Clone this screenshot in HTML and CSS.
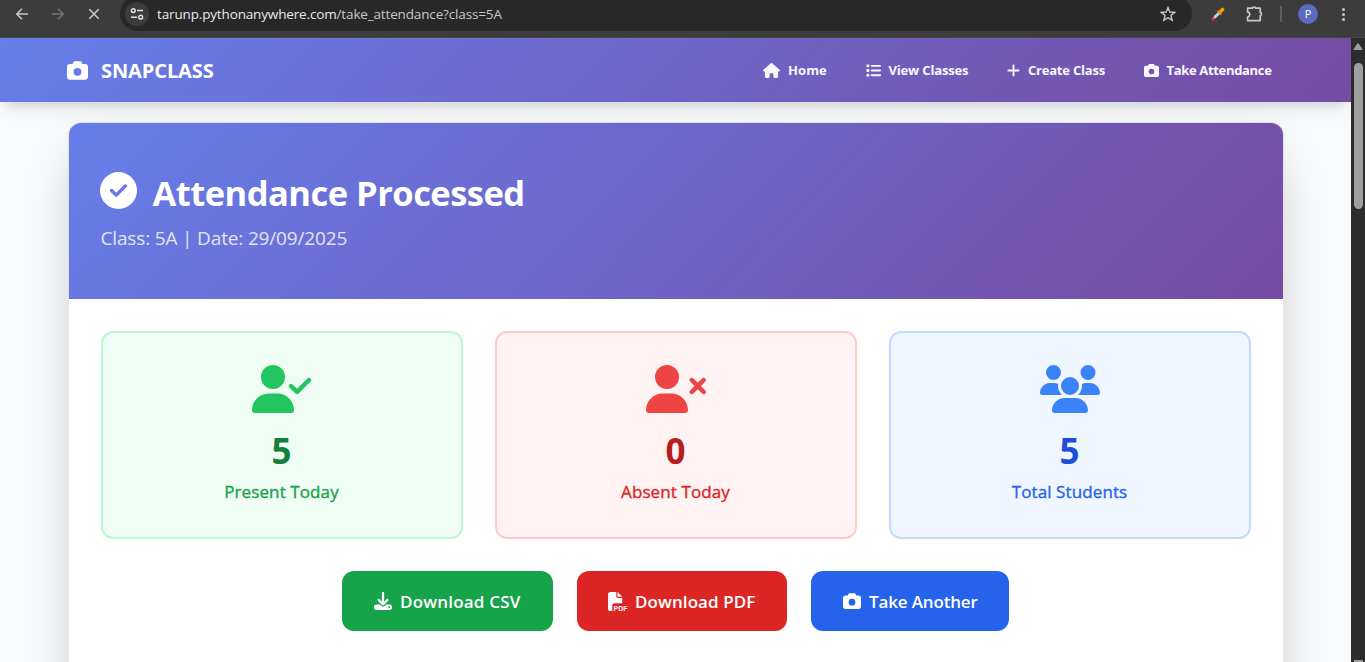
FILE: index.html
```
<!DOCTYPE html>
<html lang="en">
<head>
<meta charset="utf-8">
<title>SnapClass - Attendance Processed</title>
<link rel="stylesheet" href="styles.css">
</head>
<body>
<svg class="sprite" aria-hidden="true">
  <symbol id="camera" viewBox="0 0 512 512"><path d="M149.1 64.8L138.7 96H64C28.7 96 0 124.7 0 160V416c0 35.3 28.7 64 64 64H448c35.3 0 64-28.7 64-64V160c0-35.3-28.7-64-64-64H373.3L362.9 64.8C356.4 45.2 338.1 32 317.4 32H194.6c-20.7 0-39 13.2-45.5 32.8zM256 192a96 96 0 1 1 0 192 96 96 0 1 1 0-192z"/></symbol>
</svg>
<header class="browser">
  <svg class="b-icon back" viewBox="0 0 16 16"><path d="M14 8H3M8 2.8L2.8 8L8 13.2"/></svg>
  <svg class="b-icon forward" viewBox="0 0 16 16"><path d="M2 8H13M8 2.8L13.2 8L8 13.2"/></svg>
  <svg class="b-icon stop" viewBox="0 0 16 16"><path d="M3.3 3.3L12.7 12.7M12.7 3.3L3.3 12.7"/></svg>
  <div class="address">
    <span class="site-info"><svg viewBox="0 0 16 16"><circle cx="4.3" cy="4.6" r="1.9"/><path d="M8 4.6H14M2 11.2H8"/><circle cx="11.7" cy="11.2" r="1.9"/></svg></span>
    <span class="url"><span class="domain">tarunp.pythonanywhere.com</span>/take_attendance?class=5A</span>
    <svg class="star" viewBox="0 0 16 16"><path d="M8 1.6L9.8 6L14.6 6.4L10.9 9.5L12.1 14.2L8 11.7L3.9 14.2L5.1 9.5L1.4 6.4L6.2 6Z"/></svg>
  </div>
  <svg class="picker" viewBox="0 0 14 14"><path d="M1.8 12.3L4.3 9.8" stroke="#e91e63" stroke-width="3"/><path d="M4 10L8.3 5.7" stroke="#a6d8f5" stroke-width="2.8"/><path d="M7 4.3L9.8 7.1" stroke="#f57c00" stroke-width="1.8"/><path d="M9.2 4.8L11.6 2.4" stroke="#ff9800" stroke-width="3.6"/></svg>
  <svg class="puzzle" viewBox="0 0 18 18"><path d="M2.6 3.2H7.4A1.6 1.2 0 0 1 10.6 3.2H15.2V7.4A1.2 1.6 0 0 1 15.2 10.6V15.6H2.6V12A2.6 2.6 0 0 0 2.6 6.9V3.2Z"/></svg>
  <span class="divider"></span>
  <span class="avatar">P</span>
  <span class="more"><i></i><i></i><i></i></span>
</header>
<div class="viewport">
  <div class="page">
    <nav class="nav">
      <a class="brand"><svg class="icon"><use href="#camera"/></svg><span class="brand-name">SNAPCLASS</span></a>
      <div class="links">
        <a class="link home"><svg class="icon" viewBox="0 0 576 512"><path d="M575.8 255.5c0 18-15 32.1-32 32.1h-32l.7 160.2c0 2.7-.2 5.4-.5 8.1V472c0 22.1-17.9 40-40 40H456c-1.1 0-2.2 0-3.3-.1c-1.4 .1-2.8 .1-4.2 .1H416 392c-22.1 0-40-17.9-40-40V448 384c0-17.7-14.3-32-32-32H256c-17.7 0-32 14.3-32 32v64 24c0 22.1-17.9 40-40 40H160 128.1c-1.5 0-3-.1-4.5-.2c-1.2 .1-2.4 .2-3.6 .2H104c-22.1 0-40-17.9-40-40V360c0-.9 0-1.9 .1-2.8V287.6H32c-18 0-32-14-32-32.1c0-9 3-17 10-24L266.4 8c7-7 15-8 22-8s15 2 21 7L564.8 231.5c8 7 12 15 11 24z"/></svg><span>Home</span></a>
        <a class="link view"><svg class="icon" viewBox="0 0 512 512"><path d="M40 48C26.7 48 16 58.7 16 72v48c0 13.3 10.7 24 24 24H88c13.3 0 24-10.7 24-24V72c0-13.3-10.7-24-24-24H40zM192 64c-17.7 0-32 14.3-32 32s14.3 32 32 32H480c17.7 0 32-14.3 32-32s-14.3-32-32-32H192zm0 160c-17.7 0-32 14.3-32 32s14.3 32 32 32H480c17.7 0 32-14.3 32-32s-14.3-32-32-32H192zm0 160c-17.7 0-32 14.3-32 32s14.3 32 32 32H480c17.7 0 32-14.3 32-32s-14.3-32-32-32H192zM16 232v48c0 13.3 10.7 24 24 24H88c13.3 0 24-10.7 24-24V232c0-13.3-10.7-24-24-24H40c-13.3 0-24 10.7-24 24zM40 368c-13.3 0-24 10.7-24 24v48c0 13.3 10.7 24 24 24H88c13.3 0 24-10.7 24-24V392c0-13.3-10.7-24-24-24H40z"/></svg><span>View Classes</span></a>
        <a class="link create"><svg class="icon" viewBox="0 0 448 512"><path d="M256 80c0-17.7-14.3-32-32-32s-32 14.3-32 32V224H48c-17.7 0-32 14.3-32 32s14.3 32 32 32H192V432c0 17.7 14.3 32 32 32s32-14.3 32-32V288H400c17.7 0 32-14.3 32-32s-14.3-32-32-32H256V80z"/></svg><span>Create Class</span></a>
        <a class="link take"><svg class="icon"><use href="#camera"/></svg><span>Take Attendance</span></a>
      </div>
    </nav>
    <main class="card">
      <section class="hero">
        <h1><svg class="icon" viewBox="0 0 512 512"><path d="M256 512A256 256 0 1 0 256 0a256 256 0 1 0 0 512zM369 209L241 337c-9.4 9.4-24.6 9.4-33.9 0l-64-64c-9.4-9.4-9.4-24.6 0-33.9s24.6-9.4 33.9 0l47 47L335 175c9.4-9.4 24.6-9.4 33.9 0s9.4 24.6 0 33.9z"/></svg><span>Attendance Processed</span></h1>
        <p>Class: 5A | Date: 29/09/2025</p>
      </section>
      <section class="stats">
        <div class="stat present">
          <svg class="icon" viewBox="0 0 640 512"><path d="M96 128a128 128 0 1 1 256 0A128 128 0 1 1 96 128zM0 482.3C0 383.8 79.8 304 178.3 304h91.4C368.2 304 448 383.8 448 482.3c0 16.4-13.3 29.7-29.7 29.7H29.7C13.3 512 0 498.7 0 482.3zM625 177L497 305c-9.4 9.4-24.6 9.4-33.9 0l-64-64c-9.4-9.4-9.4-24.6 0-33.9s24.6-9.4 33.9 0l47 47L591 143c9.4-9.4 24.6-9.4 33.9 0s9.4 24.6 0 33.9z"/></svg>
          <strong>5</strong><span class="label">Present Today</span>
        </div>
        <div class="stat absent">
          <svg class="icon" viewBox="0 0 640 512"><path d="M96 128a128 128 0 1 1 256 0A128 128 0 1 1 96 128zM0 482.3C0 383.8 79.8 304 178.3 304h91.4C368.2 304 448 383.8 448 482.3c0 16.4-13.3 29.7-29.7 29.7H29.7C13.3 512 0 498.7 0 482.3zM471 143c9.4-9.4 24.6-9.4 33.9 0l47 47 47-47c9.4-9.4 24.6-9.4 33.9 0s9.4 24.6 0 33.9l-47 47 47 47c9.4 9.4 9.4 24.6 0 33.9s-24.6 9.4-33.9 0l-47-47-47 47c-9.4 9.4-24.6 9.4-33.9 0s-9.4-24.6 0-33.9l47-47-47-47c-9.4-9.4-9.4-24.6 0-33.9z"/></svg>
          <strong>0</strong><span class="label">Absent Today</span>
        </div>
        <div class="stat total">
          <svg class="icon" viewBox="0 0 640 512"><path d="M144 0a80 80 0 1 1 0 160A80 80 0 1 1 144 0zM512 0a80 80 0 1 1 0 160A80 80 0 1 1 512 0zM0 298.7C0 239.8 47.8 192 106.7 192h42.7c15.9 0 31 3.5 44.6 9.7c-1.3 7.2-1.9 14.7-1.9 22.3c0 38.2 16.8 72.5 43.3 96c-.2 0-.4 0-.7 0H21.3C9.6 320 0 310.4 0 298.7zM405.3 320c-.2 0-.4 0-.7 0c26.6-23.5 43.3-57.8 43.3-96c0-7.6-.7-15-1.9-22.3c13.6-6.3 28.7-9.7 44.6-9.7h42.7C592.2 192 640 239.8 640 298.7c0 11.8-9.6 21.3-21.3 21.3H405.3zM224 224a96 96 0 1 1 192 0 96 96 0 1 1-192 0zM128 485.3C128 411.7 187.7 352 261.3 352H378.7C452.3 352 512 411.7 512 485.3c0 14.7-11.9 26.7-26.7 26.7H154.7c-14.7 0-26.7-11.9-26.7-26.7z"/></svg>
          <strong>5</strong><span class="label">Total Students</span>
        </div>
      </section>
      <section class="actions">
        <a class="btn csv"><svg class="icon" viewBox="0 0 512 512"><path d="M288 32c0-17.7-14.3-32-32-32s-32 14.3-32 32V274.7l-73.4-73.4c-12.5-12.5-32.8-12.5-45.3 0s-12.5 32.8 0 45.3l128 128c12.5 12.5 32.8 12.5 45.3 0l128-128c12.5-12.5 12.5-32.8 0-45.3s-32.8-12.5-45.3 0L288 274.7V32zM64 352c-35.3 0-64 28.7-64 64v32c0 35.3 28.7 64 64 64H448c35.3 0 64-28.7 64-64V416c0-35.3-28.7-64-64-64H346.5l-45.3 45.3c-25 25-65.5 25-90.5 0L165.5 352H64zm368 56a24 24 0 1 1 0 48 24 24 0 1 1 0-48z"/></svg><span>Download CSV</span></a>
        <a class="btn pdf"><svg class="icon" viewBox="0 0 512 512"><path d="M0 64C0 28.7 28.7 0 64 0H224V128c0 17.7 14.3 32 32 32H384V304H176c-35.3 0-64 28.7-64 64V512H64c-35.3 0-64-28.7-64-64V64zm384 64H256V0L384 128z"/><text x="150" y="508" textLength="372" lengthAdjust="spacingAndGlyphs">PDF</text></svg><span>Download PDF</span></a>
        <a class="btn another"><svg class="icon"><use href="#camera"/></svg><span>Take Another</span></a>
      </section>
    </main>
  </div>
  <div class="scrollbar"><svg viewBox="0 0 14 14"><path d="M7 5.2L10.5 10.2H3.5Z"/></svg><span class="thumb"></span><span class="down"></span></div>
</div>
</body>
</html>
```
FILE: styles.css
```
* { box-sizing: border-box; }
body {
  margin: 0;
  width: 1365px;
  height: 662px;
  overflow: hidden;
  display: flex;
  flex-direction: column;
  font-family: "Open Sans", "Noto Sans", sans-serif;
}
span, strong, p, a { white-space: nowrap; }
.sprite { display: none; }
.icon { fill: currentColor; flex: none; display: block; overflow: visible; }

/* Browser toolbar */
.browser {
  height: 38px;
  flex: none;
  background: #3c3c3c;
  border-bottom: 1px solid #464646;
  display: flex;
  align-items: center;
  padding: 0 0 9px 14px;
}
.b-icon { width: 16px; height: 16px; flex: none; fill: none; stroke: #c7c7c7; stroke-width: 1.6; }
.forward { margin-left: 20px; stroke: #757575; }
.stop { margin-left: 20px; }
.address {
  width: 1072px;
  height: 35px;
  margin: -4px 0 0 18px;
  flex: none;
  border-radius: 17.5px;
  background: #282828;
  display: flex;
  align-items: center;
  padding: 1px 16px 0 5px;
  align-self: flex-start;
}
.site-info {
  width: 24px;
  height: 24px;
  border-radius: 50%;
  background: #3c3c3c;
  display: flex;
  align-items: center;
  justify-content: center;
}
.site-info svg { width: 16px; height: 16px; fill: none; stroke: #dedede; stroke-width: 1.5; }
.url { margin-left: 8px; font-size: 13.5px; line-height: 20px; color: #c7c7c7; letter-spacing: -0.15px; }
.domain { color: #e8e8e8; }
.star { width: 16px; height: 16px; margin-left: auto; fill: none; stroke: #c7c7c7; stroke-width: 1.4; }
.picker { width: 14px; height: 14px; margin-left: 19px; fill: none; stroke-linecap: round; flex: none; }
.puzzle { width: 18px; height: 18px; margin-left: 20px; fill: none; stroke: #c7c7c7; stroke-width: 1.7; stroke-linejoin: round; flex: none; }
.divider { width: 2px; height: 16px; background: #5e5e5e; margin-left: 17px; }
.avatar {
  width: 20px;
  height: 20px;
  margin-left: 16px;
  border-radius: 50%;
  background: #5c6bc0;
  color: #fff;
  font-size: 11px;
  line-height: 20px;
  text-align: center;
}
.more { display: flex; flex-direction: column; gap: 2px; margin-left: 24px; }
.more i { width: 3px; height: 3px; border-radius: 50%; background: #c7c7c7; }

/* Page area */
.viewport { flex: 1; display: flex; min-height: 0; }
.page {
  width: 1351px;
  height: 624px;
  overflow: hidden;
  background: #f8fafc;
  display: flex;
  flex-direction: column;
  align-items: center;
}
.nav {
  width: 100%;
  height: 64px;
  flex: none;
  padding: 0 79.5px 0 67px;
  display: flex;
  align-items: center;
  justify-content: space-between;
  color: #fff;
  background: linear-gradient(135deg, #667eea 0%, #764ba2 100%);
  box-shadow: 0 10px 25px -5px rgba(0, 0, 0, .1), 0 8px 10px -6px rgba(0, 0, 0, .1);
  position: relative;
  z-index: 1;
}
.brand { display: flex; align-items: center; gap: 13px; font-size: 20px; font-weight: 700; }
.brand .icon { width: 21px; height: 21px; }
.brand-name { letter-spacing: -0.1px; line-height: 28px; padding-top: 1px; }
.links { display: flex; align-items: center; gap: 39px; }
.link { display: flex; align-items: center; gap: 7.5px; font-size: 13px; font-weight: 700; line-height: 20px; color: #f8f7ff; letter-spacing: -0.33px; }
.link .icon { height: 15px; width: 15px; }
.home { letter-spacing: 0.15px; }
.home .icon { width: 17px; }
.view { letter-spacing: -0.15px; }
.create { letter-spacing: -0.2px; }
.create .icon { width: 13px; }

.card {
  width: 1214px;
  height: 900px;
  flex: none;
  margin-top: 21px;
  background: #fff;
  border-radius: 12px 12px 0 0;
  overflow: hidden;
  box-shadow: 0 0 0 1px #e3e4e8, 0 25px 50px -12px rgba(0, 0, 0, .25);
}
.hero {
  height: 176px;
  padding: 48px 32px 0 31px;
  color: #fff;
  background: linear-gradient(135deg, #667eea 0%, #764ba2 100%);
}
.hero h1 { margin: 0; display: flex; font-size: 34.5px; line-height: 44px; font-weight: 700; gap: 16px; }
.hero h1 .icon { width: 37px; height: 37px; margin-top: 1px; }
.hero h1 span { letter-spacing: -0.52px; }
.hero p { margin: 9px 0 0; padding-left: 1px; font-size: 19px; line-height: 28px; color: #e2e4f4; letter-spacing: -0.16px; }

.stats { display: grid; grid-template-columns: repeat(3, 362px); gap: 32px; padding: 32px 32px 0; }
.stat {
  height: 208px;
  border: 2px solid;
  border-radius: 12px;
  padding-top: 32px;
  display: flex;
  flex-direction: column;
  align-items: center;
}
.stat .icon { width: 60px; height: 48px; }
.stat strong { margin-top: 18px; font-size: 35px; line-height: 40px; }
.label { margin-top: 7px; font-size: 17px; font-weight: 400; line-height: 28px; letter-spacing: 0.1px; -webkit-text-stroke: 0.35px currentColor; }
.present { background: #f0fdf4; border-color: #bbf7d0; color: #22c55e; }
.present strong { color: #15803d; }
.present .label { color: #16a34a; }
.absent { background: #fef2f2; border-color: #fecaca; color: #ef4444; }
.absent strong { color: #b91c1c; }
.absent .label { color: #dc2626; }
.total { background: #eff6ff; border-color: #bfdbfe; color: #3b82f6; }
.total strong { color: #1d4ed8; }
.total .label { color: #2563eb; }

.actions { display: flex; justify-content: center; gap: 24px; padding-top: 32px; }
.btn {
  height: 60px;
  border-radius: 12px;
  display: flex;
  align-items: center;
  padding-left: 32px;
  gap: 8px;
  color: #fff;
  font-size: 17px;
  font-weight: 600;
}
.btn .icon { width: 18px; height: 18px; }
.btn text { font-family: "Liberation Sans", sans-serif; font-weight: 700; font-size: 215px; }
.csv { width: 211px; background: #16a34a; letter-spacing: 0.2px; }
.pdf { width: 210px; background: #dc2626; letter-spacing: 0.08px; padding-left: 31px; }
.pdf .icon { width: 19px; height: 19px; letter-spacing: 0; }
.another { width: 198px; background: #2563eb; letter-spacing: -0.15px; }

/* Scrollbar */
.scrollbar { width: 14px; background: #2c2c2c; display: flex; flex-direction: column; align-items: center; }
.scrollbar svg { width: 14px; height: 14px; margin-top: 1px; fill: #9f9f9f; stroke: #9f9f9f; stroke-width: 1.8; stroke-linejoin: round; }
.thumb { width: 9px; height: 146px; margin-top: 10px; border-radius: 5px; background: #9f9f9f; }
.down { width: 9px; height: 2px; margin-top: auto; background: #9f9f9f; }
```
